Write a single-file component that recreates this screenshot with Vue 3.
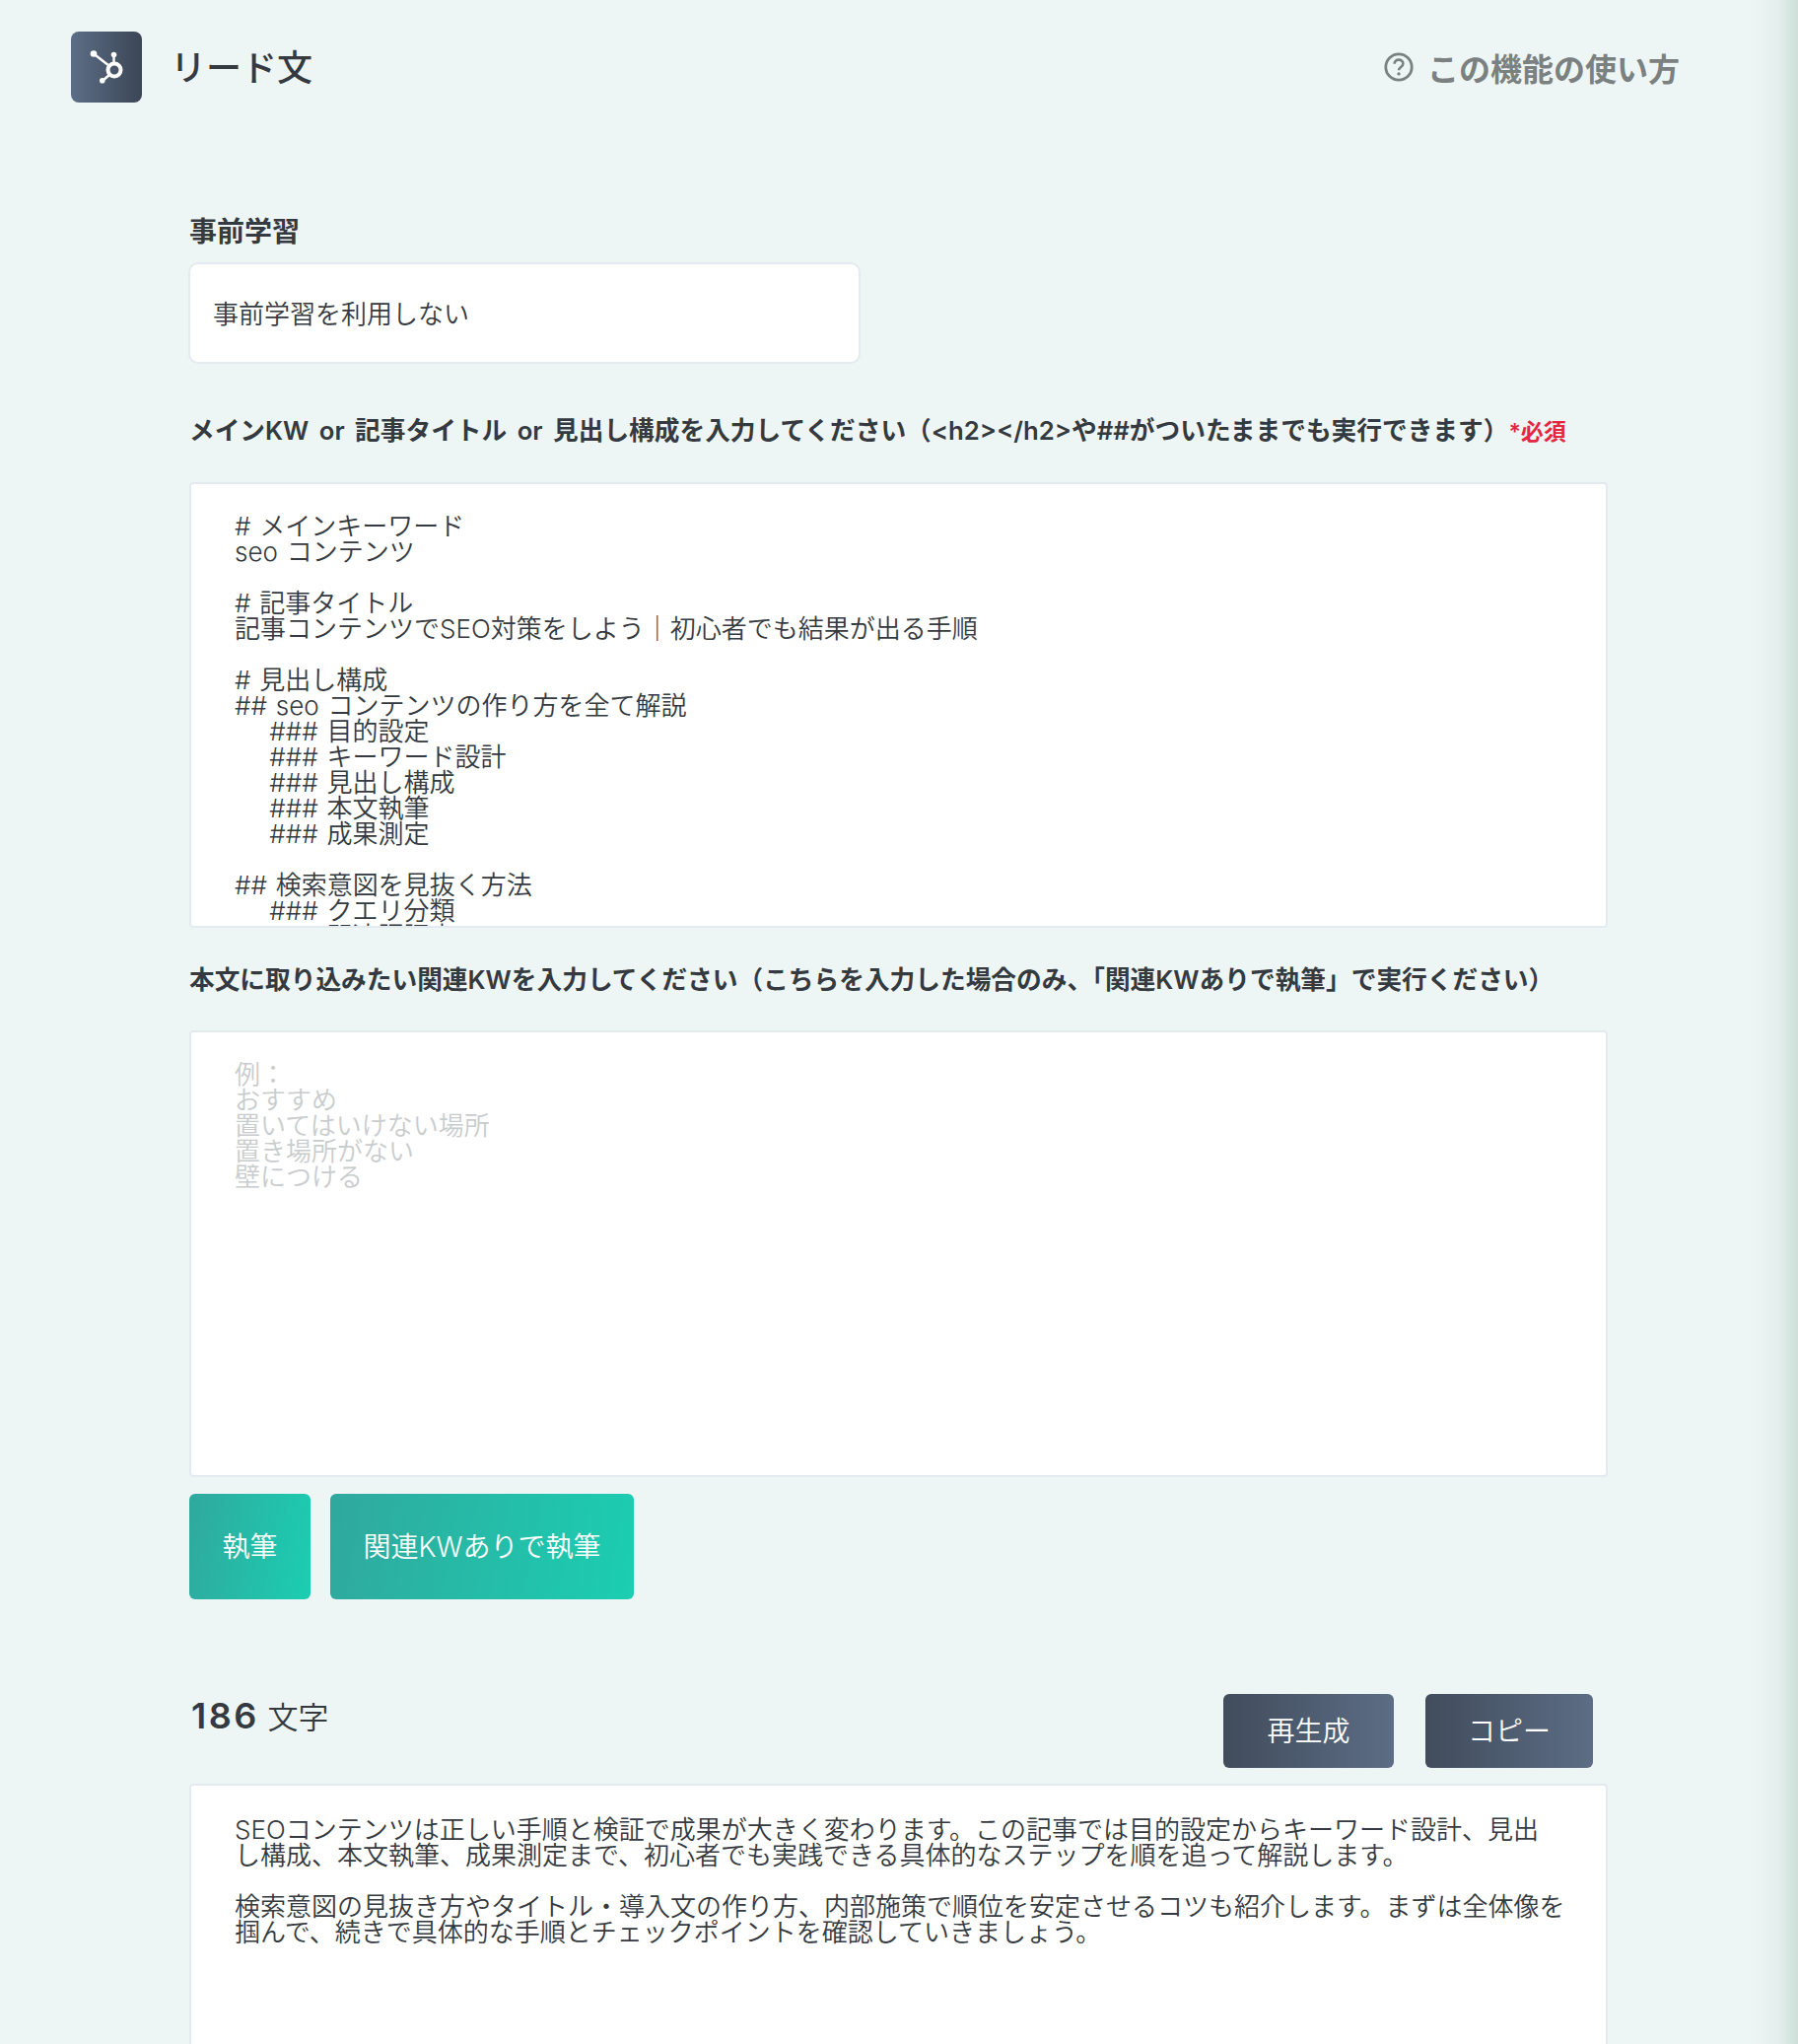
<script setup>
const mainText = `# メインキーワード
seo コンテンツ

# 記事タイトル
記事コンテンツでSEO対策をしよう｜初心者でも結果が出る手順

# 見出し構成
## seo コンテンツの作り方を全て解説
    ### 目的設定
    ### キーワード設計
    ### 見出し構成
    ### 本文執筆
    ### 成果測定

## 検索意図を見抜く方法
    ### クエリ分類
    ### 関連語調査`

const placeholder = `例：
おすすめ
置いてはいけない場所
置き場所がない
壁につける`

const resultText = `SEOコンテンツは正しい手順と検証で成果が大きく変わります。この記事では目的設定からキーワード設計、見出
し構成、本文執筆、成果測定まで、初心者でも実践できる具体的なステップを順を追って解説します。

検索意図の見抜き方やタイトル・導入文の作り方、内部施策で順位を安定させるコツも紹介します。まずは全体像を
掴んで、続きで具体的な手順とチェックポイントを確認していきましょう。`
</script>

<template>
  <div class="page">
    <header class="top">
      <div class="title-wrap">
        <div class="logo">
          <svg width="72" height="72" viewBox="0 0 72 72" fill="none">
            <circle cx="44" cy="39" r="6.5" stroke="#fff" stroke-width="4" />
            <path d="M23 22.5 L39 35 M43.5 24 V32 M32 50 L39.5 43.5" stroke="#fff" stroke-width="2.4" />
            <circle cx="23" cy="22.5" r="3.3" fill="#fff" />
            <circle cx="43.5" cy="23.5" r="2.8" fill="#fff" />
            <circle cx="31.8" cy="49.8" r="2.8" fill="#fff" />
          </svg>
        </div>
        <h1>リード文</h1>
      </div>
      <div class="help">
        <svg width="30" height="30" viewBox="0 0 30 30" fill="none">
          <circle cx="15" cy="15" r="13.2" stroke="#7b8180" stroke-width="2.8" />
          <path d="M10.6 11.8c0-2.6 2-4.2 4.4-4.2s4.4 1.6 4.4 3.9c0 3.4-4.4 3.5-4.4 6.7" stroke="#7b8180" stroke-width="2.6" />
          <circle cx="15" cy="21.9" r="1.7" fill="#7b8180" />
        </svg>
        <span>この機能の使い方</span>
      </div>
    </header>

    <main class="content">
      <h2 class="label first">事前学習</h2>
      <div class="select">事前学習を利用しない</div>

      <h2 class="label second">
        メインKW or 記事タイトル or 見出し構成を入力してください（&lt;h2&gt;&lt;/h2&gt;や##がついたままでも実行できます）<span class="req">*必須</span>
      </h2>
      <div class="area">{{ mainText }}</div>

      <h2 class="label third">本文に取り込みたい関連KWを入力してください（こちらを入力した場合のみ、「関連KWありで執筆」で実行ください）</h2>
      <div class="area muted">{{ placeholder }}</div>

      <div class="actions">
        <button class="btn teal small">執筆</button>
        <button class="btn teal wide">関連KWありで執筆</button>
      </div>

      <div class="result-head">
        <div class="count"><b>186</b> 文字</div>
        <div class="result-btns">
          <button class="btn dark regen">再生成</button>
          <button class="btn dark copy">コピー</button>
        </div>
      </div>
      <div class="area result">{{ resultText }}</div>
    </main>

    <div class="edge"></div>
  </div>
</template>

<style>
html, body {
  margin: 0;
  background: #eef6f5;
}
</style>

<style scoped>
.page {
  position: relative;
  height: 2073px;
  overflow: hidden;
  background: #eef6f5;
  color: #343a40;
  font-family: Inter, "Noto Sans CJK JP", sans-serif;
}
.top {
  display: flex;
  justify-content: space-between;
  align-items: center;
  padding: 32px 120px 0 72px;
}
.title-wrap {
  display: flex;
  align-items: center;
  gap: 29px;
}
.logo {
  width: 72px;
  height: 72px;
  border-radius: 8px;
  background: linear-gradient(90deg, #5c6e86, #3b4656);
}
.logo svg {
  display: block;
}
h1 {
  margin: 0;
  padding-top: 2px;
  font-size: 36px;
  font-weight: 500;
  line-height: 70px;
}
.help {
  display: flex;
  align-items: center;
  gap: 14px;
  font-size: 32px;
  font-weight: 700;
  color: #7b8180;
}
.content {
  width: 1439px;
  margin-left: 192px;
}
.label {
  margin: 0;
  font-size: 25.7px;
  font-weight: 600;
  line-height: 38px;
  word-spacing: 4px;
  white-space: nowrap;
}
.label.first {
  margin-top: 112px;
  margin-bottom: 12px;
  font-size: 28px;
}
.label.second {
  margin-top: 49px;
  margin-bottom: 32px;
}
.label.third {
  margin-top: 34px;
  margin-bottom: 32px;
}
.req {
  font-size: 23px;
  color: #e5263f;
}
.select {
  box-sizing: border-box;
  width: 682px;
  height: 103px;
  margin-left: -1px;
  padding: 0 24px 0 23px;
  line-height: 101px;
  font-size: 26px;
  font-weight: 350;
  background: #fff;
  border: 2px solid #e4ebf0;
  border-radius: 10px;
}
.area {
  box-sizing: border-box;
  height: 452px;
  padding: 30px 44px 0;
  overflow: hidden;
  font-size: 26px;
  font-weight: 350;
  line-height: 26px;
  word-spacing: 1.5px;
  white-space: pre;
  background: #fff;
  border: 2px solid #e4ebf0;
  border-radius: 4px;
}
.muted {
  height: 453px;
  color: #c9cccd;
}
.actions {
  display: flex;
  gap: 20px;
  margin-top: 17px;
}
.btn {
  border: none;
  padding: 0 0 3px;
  color: #fff;
  font-family: inherit;
  font-size: 28px;
  font-weight: 350;
  border-radius: 6px;
}
.teal {
  height: 107px;
  background: linear-gradient(100deg, #30a89d, #1bceb2);
}
.small {
  width: 123px;
}
.wide {
  width: 308px;
}
.result-head {
  display: flex;
  justify-content: space-between;
  margin-top: 96px;
  padding: 0 15px 0 2px;
}
.count {
  font-size: 31px;
  font-weight: 350;
  line-height: 44px;
}
.count b {
  font-size: 36px;
  font-weight: 600;
  letter-spacing: 2.5px;
}
.result-btns {
  display: flex;
  gap: 32px;
}
.dark {
  height: 75px;
  background: linear-gradient(90deg, #414c5c, #5c6d85);
}
.regen {
  width: 173px;
}
.copy {
  width: 170px;
}
.result {
  height: 300px;
  margin-top: 16px;
  padding-top: 32px;
}
.edge {
  position: absolute;
  top: 0;
  right: 0;
  bottom: 0;
  width: 50px;
  background: linear-gradient(90deg, rgba(205, 222, 216, 0), rgba(205, 222, 216, 0.3) 60%, #cddfd8);
}
</style>
